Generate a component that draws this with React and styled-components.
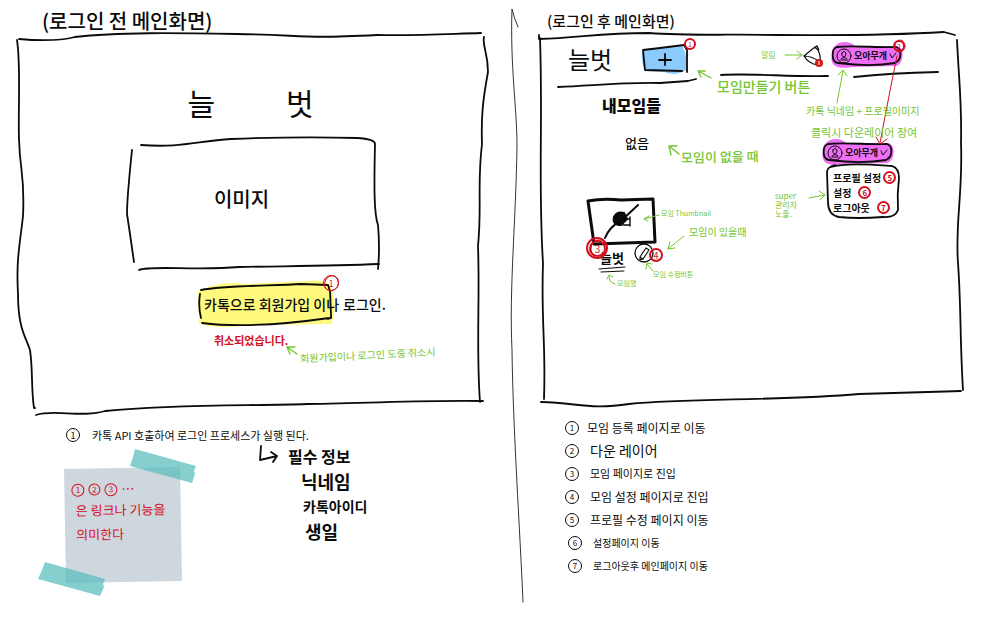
import React from "react";
import styled, { createGlobalStyle, css } from "styled-components";

const ink = "#0b0b0b";
const green = "#76c532";
const red = "#d3101f";

const GlobalStyle = createGlobalStyle`
  * { box-sizing: border-box; }
  body {
    margin: 0;
    background: #fff;
    color: ${ink};
    font-family: "Noto Sans CJK KR", "Liberation Sans", sans-serif;
  }
  h1, h2, h3, p, ol, ul { margin: 0; padding: 0; font-weight: 400; }
  ol, ul { list-style: none; }
  button { font: inherit; color: inherit; background: none; border: 0; padding: 0; cursor: pointer; }
`;

const Board = styled.main`
  display: grid;
  grid-template-columns: 513fr 487fr;
  min-height: 100vh;
  overflow: hidden;
`;

const Pane = styled.section`
  position: relative;
  padding-top: 8px;
`;

const Ink = styled.svg`
  position: absolute;
  top: 0;
  left: 0;
  width: ${(p) => p.$w}px;
  height: 625px;
  overflow: visible;
  pointer-events: none;
  fill: none;
  stroke: ${ink};
  stroke-width: 1.8;
  stroke-linecap: round;
  stroke-linejoin: round;
  z-index: 2;
`;

const Outline = styled.svg`
  position: absolute;
  inset: 0;
  width: 100%;
  height: 100%;
  overflow: visible;
  fill: none;
  stroke: ${ink};
  stroke-width: ${(p) => p.$weight || 1.8};
  stroke-linecap: round;
  stroke-linejoin: round;
  path { vector-effect: non-scaling-stroke; }
`;

const Title = styled.h1`
  padding-left: ${(p) => p.$indent}px;
  font-size: ${(p) => p.$size}px;
  line-height: ${(p) => p.$line}px;
  font-weight: 500;
`;

const Frame = styled.div`
  position: relative;
  min-height: ${(p) => p.$h}px;
  margin: ${(p) => p.$margin};
`;

const Note = styled.p`
  position: absolute;
  left: ${(p) => p.$x}px;
  top: ${(p) => p.$y}px;
  color: ${green};
  font-size: ${(p) => p.$size || 10}px;
  font-weight: ${(p) => p.$weight || 400};
  line-height: ${(p) => p.$line || 16}px;
  white-space: nowrap;
  transform: rotate(${(p) => p.$tilt || 0}deg);
  z-index: 3;
`;

const Brand = styled.h2`
  display: flex;
  justify-content: center;
  gap: 71px;
  padding-top: 52px;
  font-size: 30px;
  line-height: 32px;
`;

const Picture = styled.div`
  position: relative;
  display: grid;
  place-items: center;
  height: 132px;
  margin: 20px 104px 0 114px;
  padding: 0 28px 12px 0;
  font-size: 20px;
  font-weight: 500;
`;

const LoginRow = styled.div`
  display: flex;
  align-items: center;
  gap: 4px;
  margin: 11px 0 0 180px;
  font-size: 14px;
  font-weight: 500;
  white-space: nowrap;
`;

const KakaoButton = styled.button`
  position: relative;
  height: 46px;
  padding-left: 7px;
  span { position: relative; }
`;

const Cancelled = styled.p`
  margin: 5px 0 0 197px;
  color: ${red};
  font-size: 11px;
  font-weight: 700;
  line-height: 16px;
`;

const Process = styled.p`
  display: flex;
  align-items: center;
  gap: 12px;
  margin-left: 66px;
  font-size: 11px;
  line-height: 18px;
  padding-top: 10px;
`;

const Ring = styled.span`
  display: inline-flex;
  flex: none;
  align-items: center;
  justify-content: center;
  width: ${(p) => p.$d || 14}px;
  height: ${(p) => p.$d || 14}px;
  border: ${(p) => p.$b || 1}px solid currentColor;
  border-radius: 50%;
  font-size: ${(p) => p.$size || 9}px;
  line-height: 1;
`;

const Badge = styled(Ring)`
  position: absolute;
  left: ${(p) => p.$x}px;
  top: ${(p) => p.$y}px;
  color: ${red};
  z-index: 3;
`;

const Below = styled.div`
  display: flex;
  align-items: flex-start;
`;

const Sticky = styled.aside`
  width: 116px;
  height: 114px;
  margin: 24px 0 0 65px;
  padding: 12px 0 0 11px;
  background: #cfd7de;
  color: ${red};
  font-size: 13px;
  line-height: 24px;
  white-space: nowrap;
  transform: rotate(-1deg);
`;

const RingRow = styled.div`
  display: flex;
  align-items: center;
  gap: 4px;
  height: 18px;
  margin-left: -4px;
`;

const Required = styled.ul`
  margin-left: 107px;
  font-weight: 700;
  line-height: 25px;
  white-space: nowrap;
`;

const RequiredItem = styled.li`
  padding-left: ${(p) => p.$indent || 0}px;
  font-size: ${(p) => p.$size}px;
`;

const Header = styled.header`
  display: flex;
  align-items: center;
  height: 52px;
  padding: 0 62px 0 29px;
`;

const Logo = styled.h2`
  font-size: 24px;
  line-height: 32px;
`;

const AddButton = styled.button`
  position: relative;
  width: 46px;
  height: 28px;
  margin-left: 30px;
`;

const AlarmButton = styled.button`
  width: 22px;
  height: 22px;
  margin: 0 8px 0 auto;
  svg { display: block; overflow: visible; }
`;

const profile = css`
  position: relative;
  display: flex;
  align-items: center;
  width: 70px;
  height: 22px;
  padding-left: 22px;
  font-size: 9px;
  font-weight: 700;
  line-height: 14px;
  white-space: nowrap;
  span { position: relative; }
`;

const ProfileButton = styled.button`
  ${profile}
  margin-bottom: 6px;
`;

const Dropdown = styled.div`
  position: absolute;
  left: 284px;
  top: 109px;
`;

const DropdownHead = styled.button`
  ${profile}
`;

const Menu = styled.ul`
  position: relative;
  width: 73px;
  height: 55px;
  margin-left: 4px;
  padding: 6px 0 0 6px;
  font-size: 10px;
  font-weight: 700;
  line-height: 15px;
`;

const MenuItem = styled.li`
  position: relative;
  display: flex;
  align-items: center;
  gap: ${(p) => p.$gap || 2}px;
  white-space: nowrap;
  ${Ring} { color: ${red}; }
`;

const SectionTitle = styled.h3`
  padding: 10px 0 0 63px;
  font-size: 16px;
  font-weight: 900;
  line-height: 20px;
`;

const Empty = styled.p`
  padding: 18px 0 0 86px;
  font-size: 13px;
  font-weight: 500;
  line-height: 20px;
`;

const Card = styled.article`
  padding: 45px 0 0 48px;
`;

const Thumb = styled.div`
  position: relative;
  width: 68px;
  height: 46px;
`;

const CardFoot = styled.div`
  display: flex;
  align-items: center;
  gap: 11px;
  padding: 4px 0 0 13px;
  font-size: 13px;
  font-weight: 700;
  line-height: 20px;
`;

const EditButton = styled.button`
  width: 19px;
  height: 19px;
  margin-top: -10px;
  svg { display: block; overflow: visible; }
`;

const Steps = styled.ol`
  padding: 11px 0 0 51px;
`;

const Step = styled.li`
  display: flex;
  align-items: center;
  gap: ${(p) => p.$gap || 11}px;
  padding-left: ${(p) => p.$indent || 1}px;
  font-size: ${(p) => p.$size}px;
  line-height: 23px;
  white-space: nowrap;
`;

const steps = [
  { text: "모임 등록 페이지로 이동", size: 12, gap: 8 },
  { text: "다운 레이어", size: 14 },
  { text: "모임 페이지로 진입", size: 11 },
  { text: "모임 설정 페이지로 진입", size: 12 },
  { text: "프로필 수정 페이지 이동", size: 12 },
  { text: "설정페이지 이동", size: 10, indent: 4 },
  { text: "로그아웃후 메인페이지 이동", size: 10, indent: 4 },
];

function ProfileArt() {
  return (
    <Outline viewBox="0 0 70 22" aria-hidden="true">
      <path
        d="M0 10C-2-3 16-7 23 1L66 1C73 4 72 19 64 21L20 22C5 25-3 20 0 10Z"
        fill="#ee6ef5"
        stroke="none"
      />
      <path d="M5 2C20 0 48 3 64 2C70 4 70 15 63 18C45 21 22 20 6 18C-1 17-1 4 5 2Z" />
      <ellipse cx="12" cy="11" rx="7" ry="7" strokeWidth="1" />
      <path d="M9 14Q12 11 15 14M10 8Q12 5 14 8Q14 12 12 12Q9 11 10 8ZM9 15H15" strokeWidth="1" />
      <path d="M58 9L60 13L64 8" strokeWidth="1" />
    </Outline>
  );
}

function LeftPane() {
  return (
    <Pane>
      <Title $indent={42} $size={20} $line={26}>(로그인 전 메인화면)</Title>
      <Frame $h={382} $margin="0 29px 0 17px">
        <Outline viewBox="0 0 467 382" preserveAspectRatio="none" aria-hidden="true">
          <path d="M2 5C24 7 42 7 58 3C100-2 160-1 220 0C290 1 280 5 360 1C400 2 430 0 464-1" />
          <path d="M0 6C4 32 1 72 2 105C3 140 8 140 6 182C3 210-1 225 1 260C1 295 9 303 13 316C16 336 14 354 17 374L18 374" />
          <path d="M467 3C465 12 471 18 471 38C466 65 464 82 465 110C460 150 465 172 461 212C463 265 459 315 463 368" />
          <path d="M19 381C37 375 65 384 88 377C160 370 230 372 290 370C360 369 410 366 466 367" />
        </Outline>
        <Brand><span>늘</span><span>벗</span></Brand>
        <Picture>
          <Outline viewBox="0 0 249 132" preserveAspectRatio="none" aria-hidden="true">
            <path d="M10 7C50 10 66 3 100 1C150-1 190-1 226 0Q244 1 244 6C243 50 243 76 247 87Q249 110 247 131" />
            <path d="M1 12Q-4 60-4 76L-1 96L3 124" />
            <path d="M8 132C20 127 65 133 108 129C160 128 200 128 248 126" />
          </Outline>
          이미지
        </Picture>
        <LoginRow>
          <KakaoButton type="button">
            <Outline viewBox="0 0 142 46" preserveAspectRatio="none" aria-hidden="true">
              <path d="M1 10Q24-1 48 3L112 0Q134-3 136 14Q140 30 134 43L55 44Q14 49 2 42Z" fill="#fff97d" stroke="none" />
              <path d="M4 9C30 4 78 5 104 3L131 4L133 11L134 37L131 38M3 13Q1 25 4 37M5 42C45 47 90 43 132 37" />
            </Outline>
            <span>카톡으로 회원가입 이나</span>
          </KakaoButton>
          <span>로그인.</span>
        </LoginRow>
        <Cancelled>취소되었습니다.</Cancelled>
      </Frame>
      <Note $x={300} $y={347} $tilt={-3}>회원가입이나 로그인 도중 취소시</Note>
      <Badge $x={323} $y={275} $d={16}>1</Badge>
      <Process>
        <Ring>1</Ring>
        <span>카톡 API 호출하여 로그인 프로세스가 실행 된다.</span>
      </Process>
      <Below>
        <Sticky>
          <RingRow>
            <Ring $d={13} $size={8}>1</Ring>
            <Ring $d={12} $size={8}>2</Ring>
            <Ring $d={13} $size={8}>3</Ring>
            <span>…</span>
          </RingRow>
          <p>은 링크나 기능을</p>
          <p>의미한다</p>
        </Sticky>
        <Required>
          <RequiredItem $size={16}>필수 정보</RequiredItem>
          <RequiredItem $size={18} $indent={13}>닉네임</RequiredItem>
          <RequiredItem $size={14} $indent={15}>카톡아이디</RequiredItem>
          <RequiredItem $size={18} $indent={17}>생일</RequiredItem>
        </Required>
      </Below>
      <Ink $w={513} viewBox="0 0 513 625" aria-hidden="true">
        <path d="M326 279Q333 272 338 279Q340 289 331 291Q321 289 326 279" stroke={red} strokeWidth="1" />
        <path d="M287 347L297 354M287 347H295M287 347L290 354" stroke={green} strokeWidth="1.4" />
        <path d="M261 446L260 460L277 456M271 452L277 456L273 462" />
        <g fill="#57bcbd" fillOpacity="0.72" stroke="none">
          <path d="M135 449L196 466L194 471L195 474L192 483L130 466L133 457Z" />
          <path d="M45 562L105 579L103 584L104 587L100 596L38 579L42 570Z" />
        </g>
        <path d="M518 27Q514 18 512 9C510 65 517 110 517 145C516 220 509 290 512 350C513 430 520 530 523 602" stroke="#333" strokeWidth="1" />
      </Ink>
    </Pane>
  );
}

function RightPane() {
  return (
    <Pane>
      <Title $indent={34} $size={15} $line={25}>(로그인 후 메인화면)</Title>
      <Frame $h={372} $margin="0 36px 0 26px">
        <Outline viewBox="0 0 425 372" preserveAspectRatio="none" aria-hidden="true">
          <path d="M0 2L0 6C40 5 60 0 110 0C150 3 190 1 240 2C300 2 340 3 405-1L416 2" />
          <path d="M1 5C4 90-1 150 4 230C2 290 7 310 5 366" />
          <path d="M418 7C420 50 423 70 422 110C424 160 416 190 419 230C422 270 421 310 424 357" />
          <path d="M2 369C40 370 50 377 90 371C150 365 240 368 320 361C360 360 390 359 422 358" />
        </Outline>
        <Header>
          <Logo>늘벗</Logo>
          <AddButton type="button" aria-label="모임만들기">
            <Outline viewBox="0 0 46 28" aria-hidden="true">
              <path d="M1 4L40 1Q46 10 44 25Q34 32 22 27L3 26Q-2 15 1 4Z" fill="#8bcbfb" stroke="none" />
              <path d="M1 5L18 3L42 0L45 5V27M1 5L3 25L40 26M17 15H29M23 9V20" />
            </Outline>
          </AddButton>
          <AlarmButton type="button" aria-label="알림">
            <svg width="22" height="22" viewBox="0 0 22 22" fill="none" stroke={ink} strokeWidth="1.2">
              <path d="M2 8Q8 3 13-1L16 2Q19 8 18 14Q10 8 2 8Q6 15 15 17M12 0L15-2L17 2" />
              <circle cx="17" cy="15" r="4" fill="#d91a18" stroke="none" />
              <path d="M17 13V17" stroke="#fff" strokeWidth="1" />
            </svg>
          </AlarmButton>
          <ProfileButton type="button">
            <ProfileArt />
            <span>오아무개</span>
          </ProfileButton>
        </Header>
        <SectionTitle>내모임들</SectionTitle>
        <Empty>없음</Empty>
        <Card>
          <Thumb>
            <Outline viewBox="0 0 68 46" $weight={3} aria-hidden="true">
              <path d="M1 3Q16 0 34 2L66 1L68 44L7 46L1 3" />
              <path d="M51 7L35 22Q22 29 18 40" strokeWidth="2" />
              <path d="M27 19Q30 13 37 15L40 21L34 27Q25 27 27 19Z" fill={ink} strokeWidth="2" />
              <path d="M40 21H43V27H36M43 19V28" strokeWidth="1.4" />
            </Outline>
          </Thumb>
          <CardFoot>
            <span>늘벗</span>
            <EditButton type="button" aria-label="모임 수정">
              <svg width="19" height="19" viewBox="0 0 19 19" fill="none" stroke={ink} strokeWidth="1.3">
                <circle cx="9" cy="9" r="9" />
                <path d="M5 13L11 4L14 6L8 15ZM5 13V16L8 15" strokeWidth="1.1" />
              </svg>
            </EditButton>
          </CardFoot>
        </Card>
        <Dropdown>
          <DropdownHead type="button">
            <ProfileArt />
            <span>오아무개</span>
          </DropdownHead>
          <Menu>
            <Outline viewBox="0 0 73 55" preserveAspectRatio="none" aria-hidden="true">
              <path d="M4 3C20-2 50 1 65 2Q72 4 72 14Q70 30 71 46Q68 54 56 53Q30 55 12 53Q1 51 1 38L0 8Q0 3 8 1" />
            </Outline>
            <MenuItem>프로필 설정<Ring $d={13} $b={2} $size={8}>5</Ring></MenuItem>
            <MenuItem $gap={7}>설정<Ring $d={13} $b={2} $size={8}>6</Ring></MenuItem>
            <MenuItem $gap={7}>로그아웃<Ring $d={13} $b={2} $size={8}>7</Ring></MenuItem>
          </Menu>
        </Dropdown>
      </Frame>
      <Badge $x={171} $y={38} $d={12} $b={2} $size={7}>1</Badge>
      <Badge $x={380} $y={40} $d={12} $b={2} $size={7}>2</Badge>
      <Badge $x={76} $y={240} $d={17} $b={2} $size={10}>3</Badge>
      <Badge $x={136} $y={248} $d={14} $b={2} $size={9}>4</Badge>
      <Note $x={204} $y={78} $size={14} $weight={500}>모임만들기 버튼</Note>
      <Note $x={168} $y={149} $size={13} $weight={500} $tilt={-1}>모임이 없을 때</Note>
      <Note $x={248} $y={47} $size={8}>알림</Note>
      <Note $x={293} $y={103}>카톡 닉네임 + 프로필이미지</Note>
      <Note $x={298} $y={124} $size={11}>클릭시 다운레이어 장여</Note>
      <Note $x={262} $y={191} $size={8} $line={9}>super<br />관리자<br />노출.</Note>
      <Note $x={148} $y={205} $size={7}>모임 Thumbnail</Note>
      <Note $x={176} $y={224}>모임이 있을때</Note>
      <Note $x={140} $y={266} $size={7}>모임 수정버튼</Note>
      <Note $x={104} $y={275} $size={7}>모임명</Note>
      <Steps>
        {steps.map((s, i) => (
          <Step key={s.text} $size={s.size} $gap={s.gap} $indent={s.indent}>
            <Ring $size={8}>{i + 1}</Ring>
            <span>{s.text}</span>
          </Step>
        ))}
      </Steps>
      <Ink $w={487} viewBox="513 0 487 625" aria-hidden="true">
        <path d="M558 87C600 85 630 82 660 83L688 81L696 79M721 75C750 73 790 77 828 76M854 77Q890 73 938 72" />
        <path d="M599 269L625 267M601 272L624 271" strokeWidth="1" />
        <g stroke={green}>
          <path d="M711 78L698 71M698 71H705M698 71L701 77" strokeWidth="1.4" />
          <path d="M679 154L669 146M669 146H677M669 146L671 155" strokeWidth="1.4" />
          <path d="M785 55H802M797 51L802 55L797 59" strokeWidth="1" />
          <path d="M837 103L843 71M838 75L843 70L847 76" strokeWidth="1" />
          <path d="M809 198L825 195M819 191L825 195L820 200" strokeWidth="1" />
          <path d="M659 215L644 219M649 216L644 219L648 221" strokeWidth="1" />
          <path d="M684 236L668 249M670 242L668 249L675 248" strokeWidth="1" />
          <path d="M653 271L647 264M646 269L647 263L652 264" strokeWidth="1" />
          <path d="M615 284Q609 283 609 276M607 279L609 275L613 277" strokeWidth="1" />
        </g>
        <g stroke={red} strokeWidth="1">
          <path d="M897 56Q890 90 880 143M876 137L880 144L887 139" />
          <ellipse cx="597" cy="248" rx="10" ry="10" strokeWidth="2" />
          <ellipse cx="598" cy="249" rx="7" ry="9" />
          <ellipse cx="900" cy="46" rx="5" ry="6" />
        </g>
      </Ink>
    </Pane>
  );
}

export default function App() {
  return (
    <>
      <GlobalStyle />
      <Board>
        <LeftPane />
        <RightPane />
      </Board>
    </>
  );
}
